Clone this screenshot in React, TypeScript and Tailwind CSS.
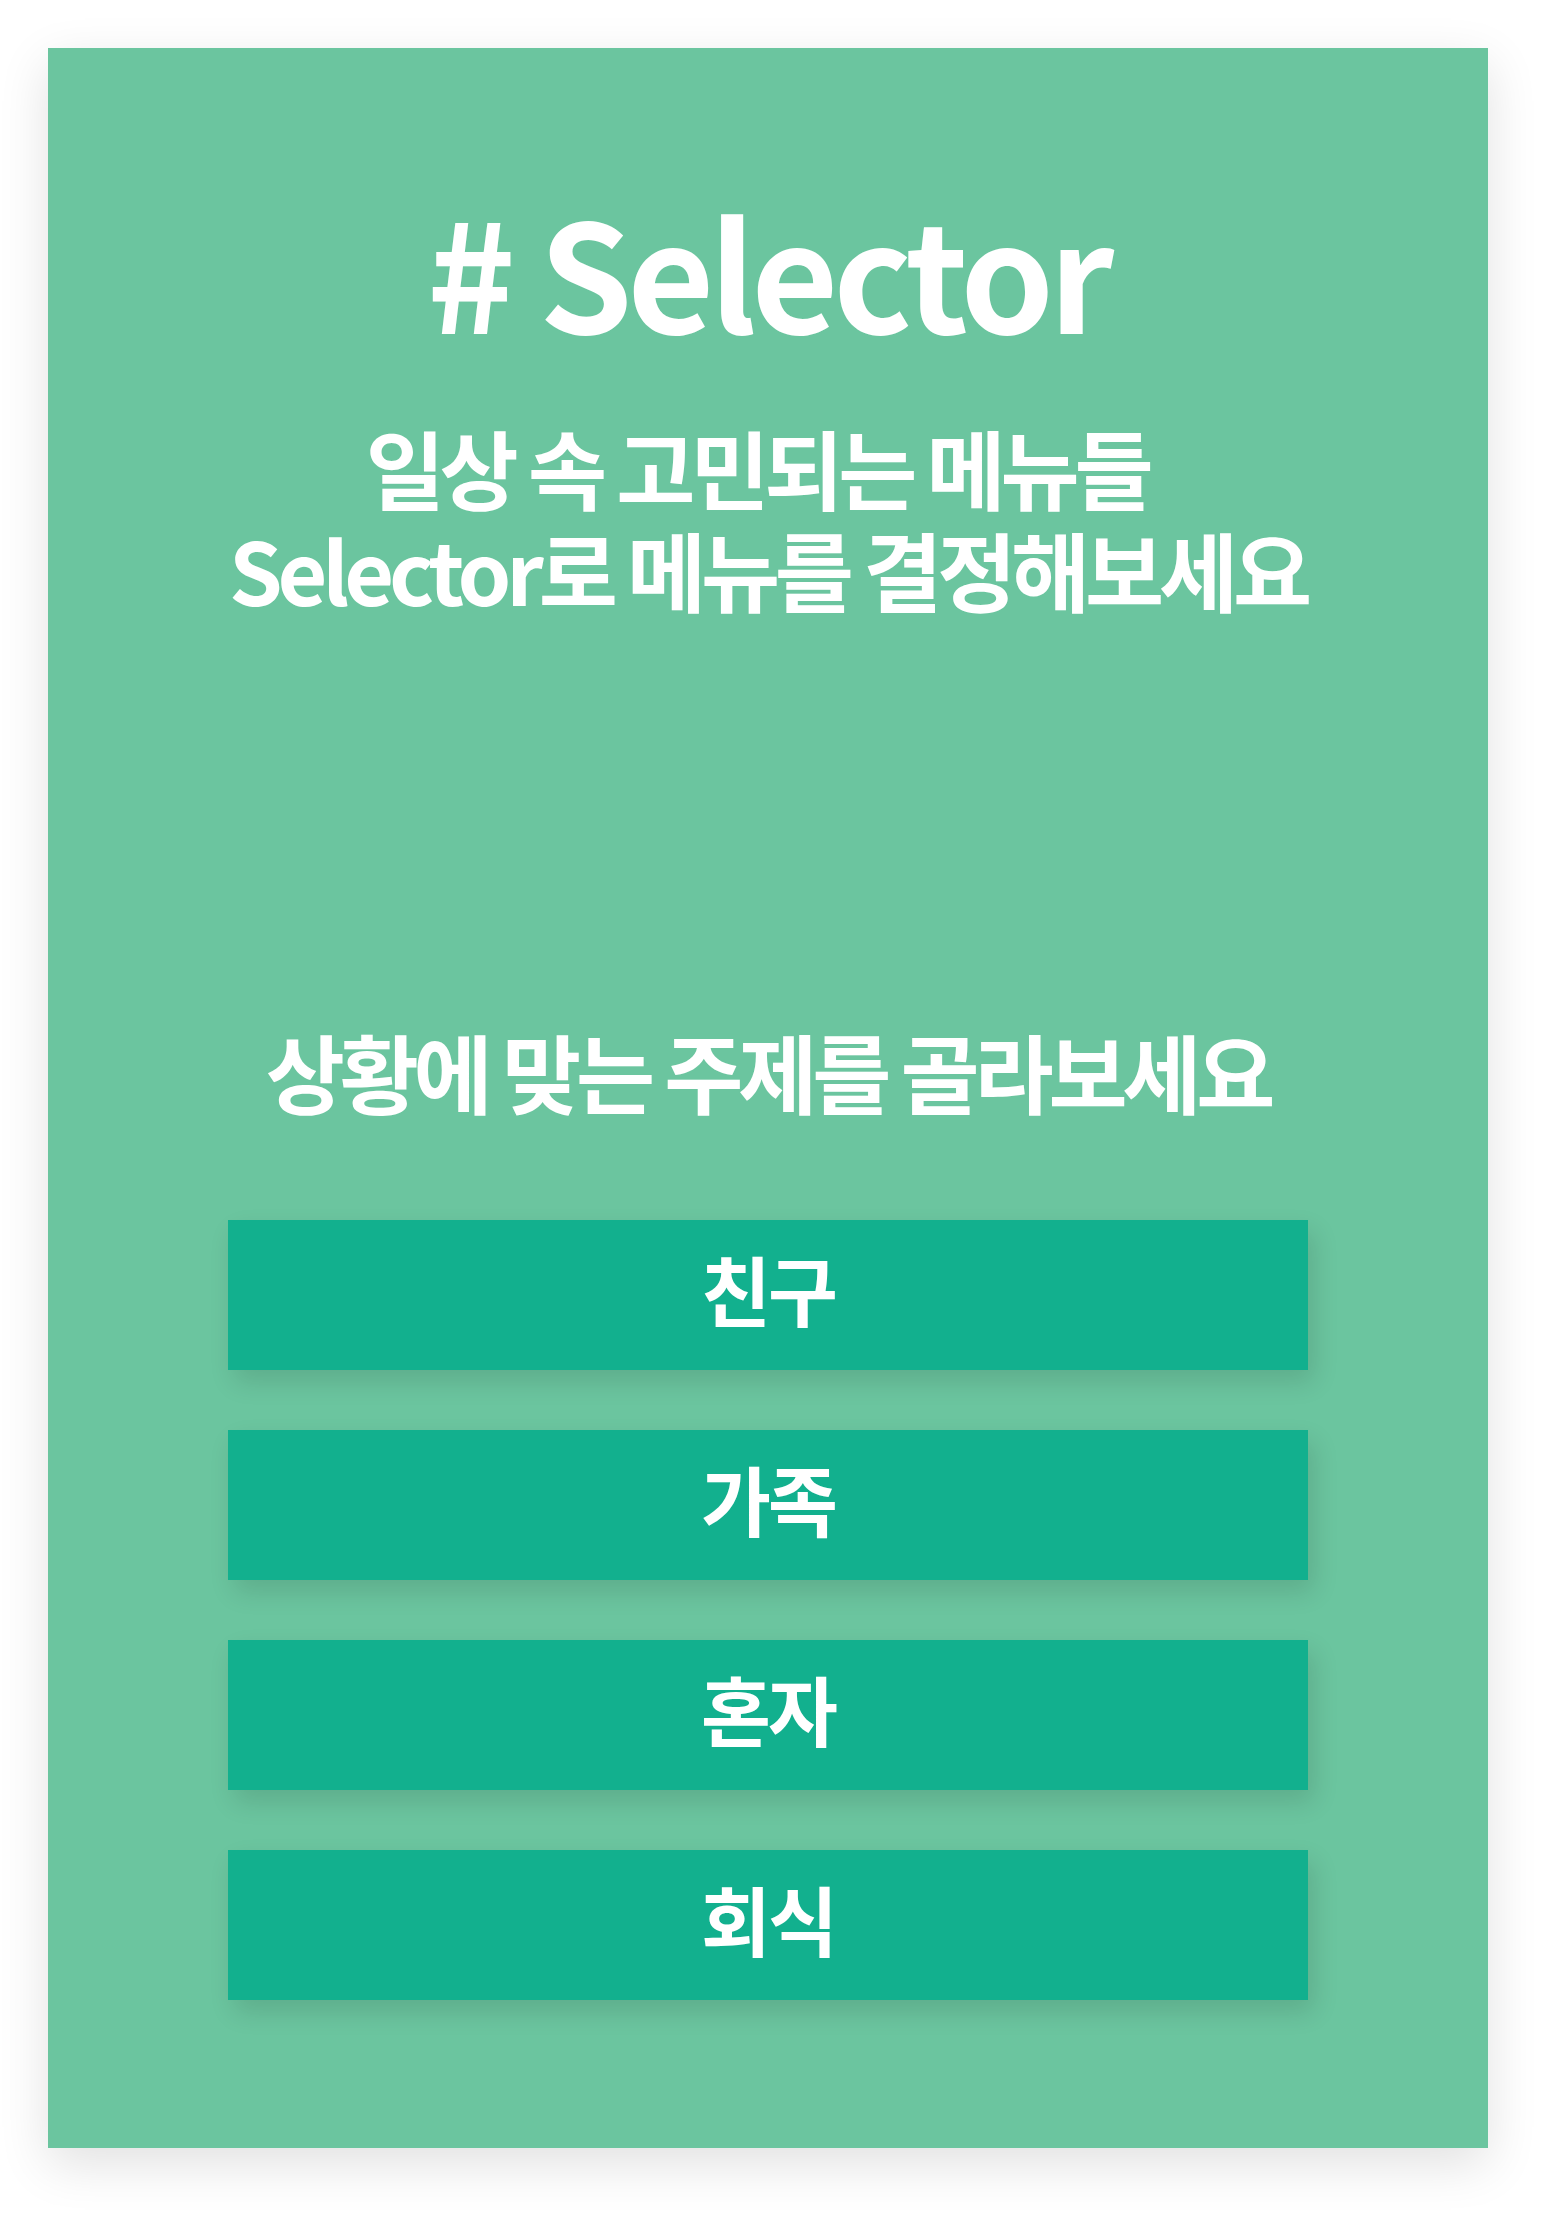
const FONT = "font-['Noto_Sans_CJK_KR','Noto_Sans',sans-serif]";

const topics = ["친구", "가족", "혼자", "회식"];

function TopicButton({ label }: { label: string }) {
  return (
    <button
      type="button"
      className="flex h-[150px] w-[1080px] items-center justify-center bg-[#12b08e] pb-[14px] text-[76px] font-bold leading-none tracking-[-0.04em] text-white shadow-[6px_12px_24px_rgba(0,0,0,0.12)]"
    >
      {label}
    </button>
  );
}

export default function App() {
  return (
    <div className={`${FONT} min-h-screen bg-white p-12`}>
      <div className="flex h-[2100px] w-[1440px] flex-col items-center bg-[#6bc59f] text-white shadow-[0_16px_48px_rgba(0,0,0,0.12)]">
        <h1 className="mt-[146px] text-[150px] font-bold leading-none tracking-[-0.035em]">
          # Selector
        </h1>
        <p className="mt-[72px] flex flex-col items-center text-[86px] font-bold leading-[102px] tracking-[-0.06em]">
          <span className="pr-[22px]">일상 속 고민되는 메뉴들</span>
          <span>Selector로 메뉴를 결정해보세요</span>
        </p>
        <h2 className="mt-[408px] text-[86px] font-bold leading-none tracking-[-0.06em]">
          상황에 맞는 주제를 골라보세요
        </h2>
        <div className="mt-[106px] flex flex-col gap-[60px]">
          {topics.map((t) => (
            <TopicButton key={t} label={t} />
          ))}
        </div>
      </div>
    </div>
  );
}
